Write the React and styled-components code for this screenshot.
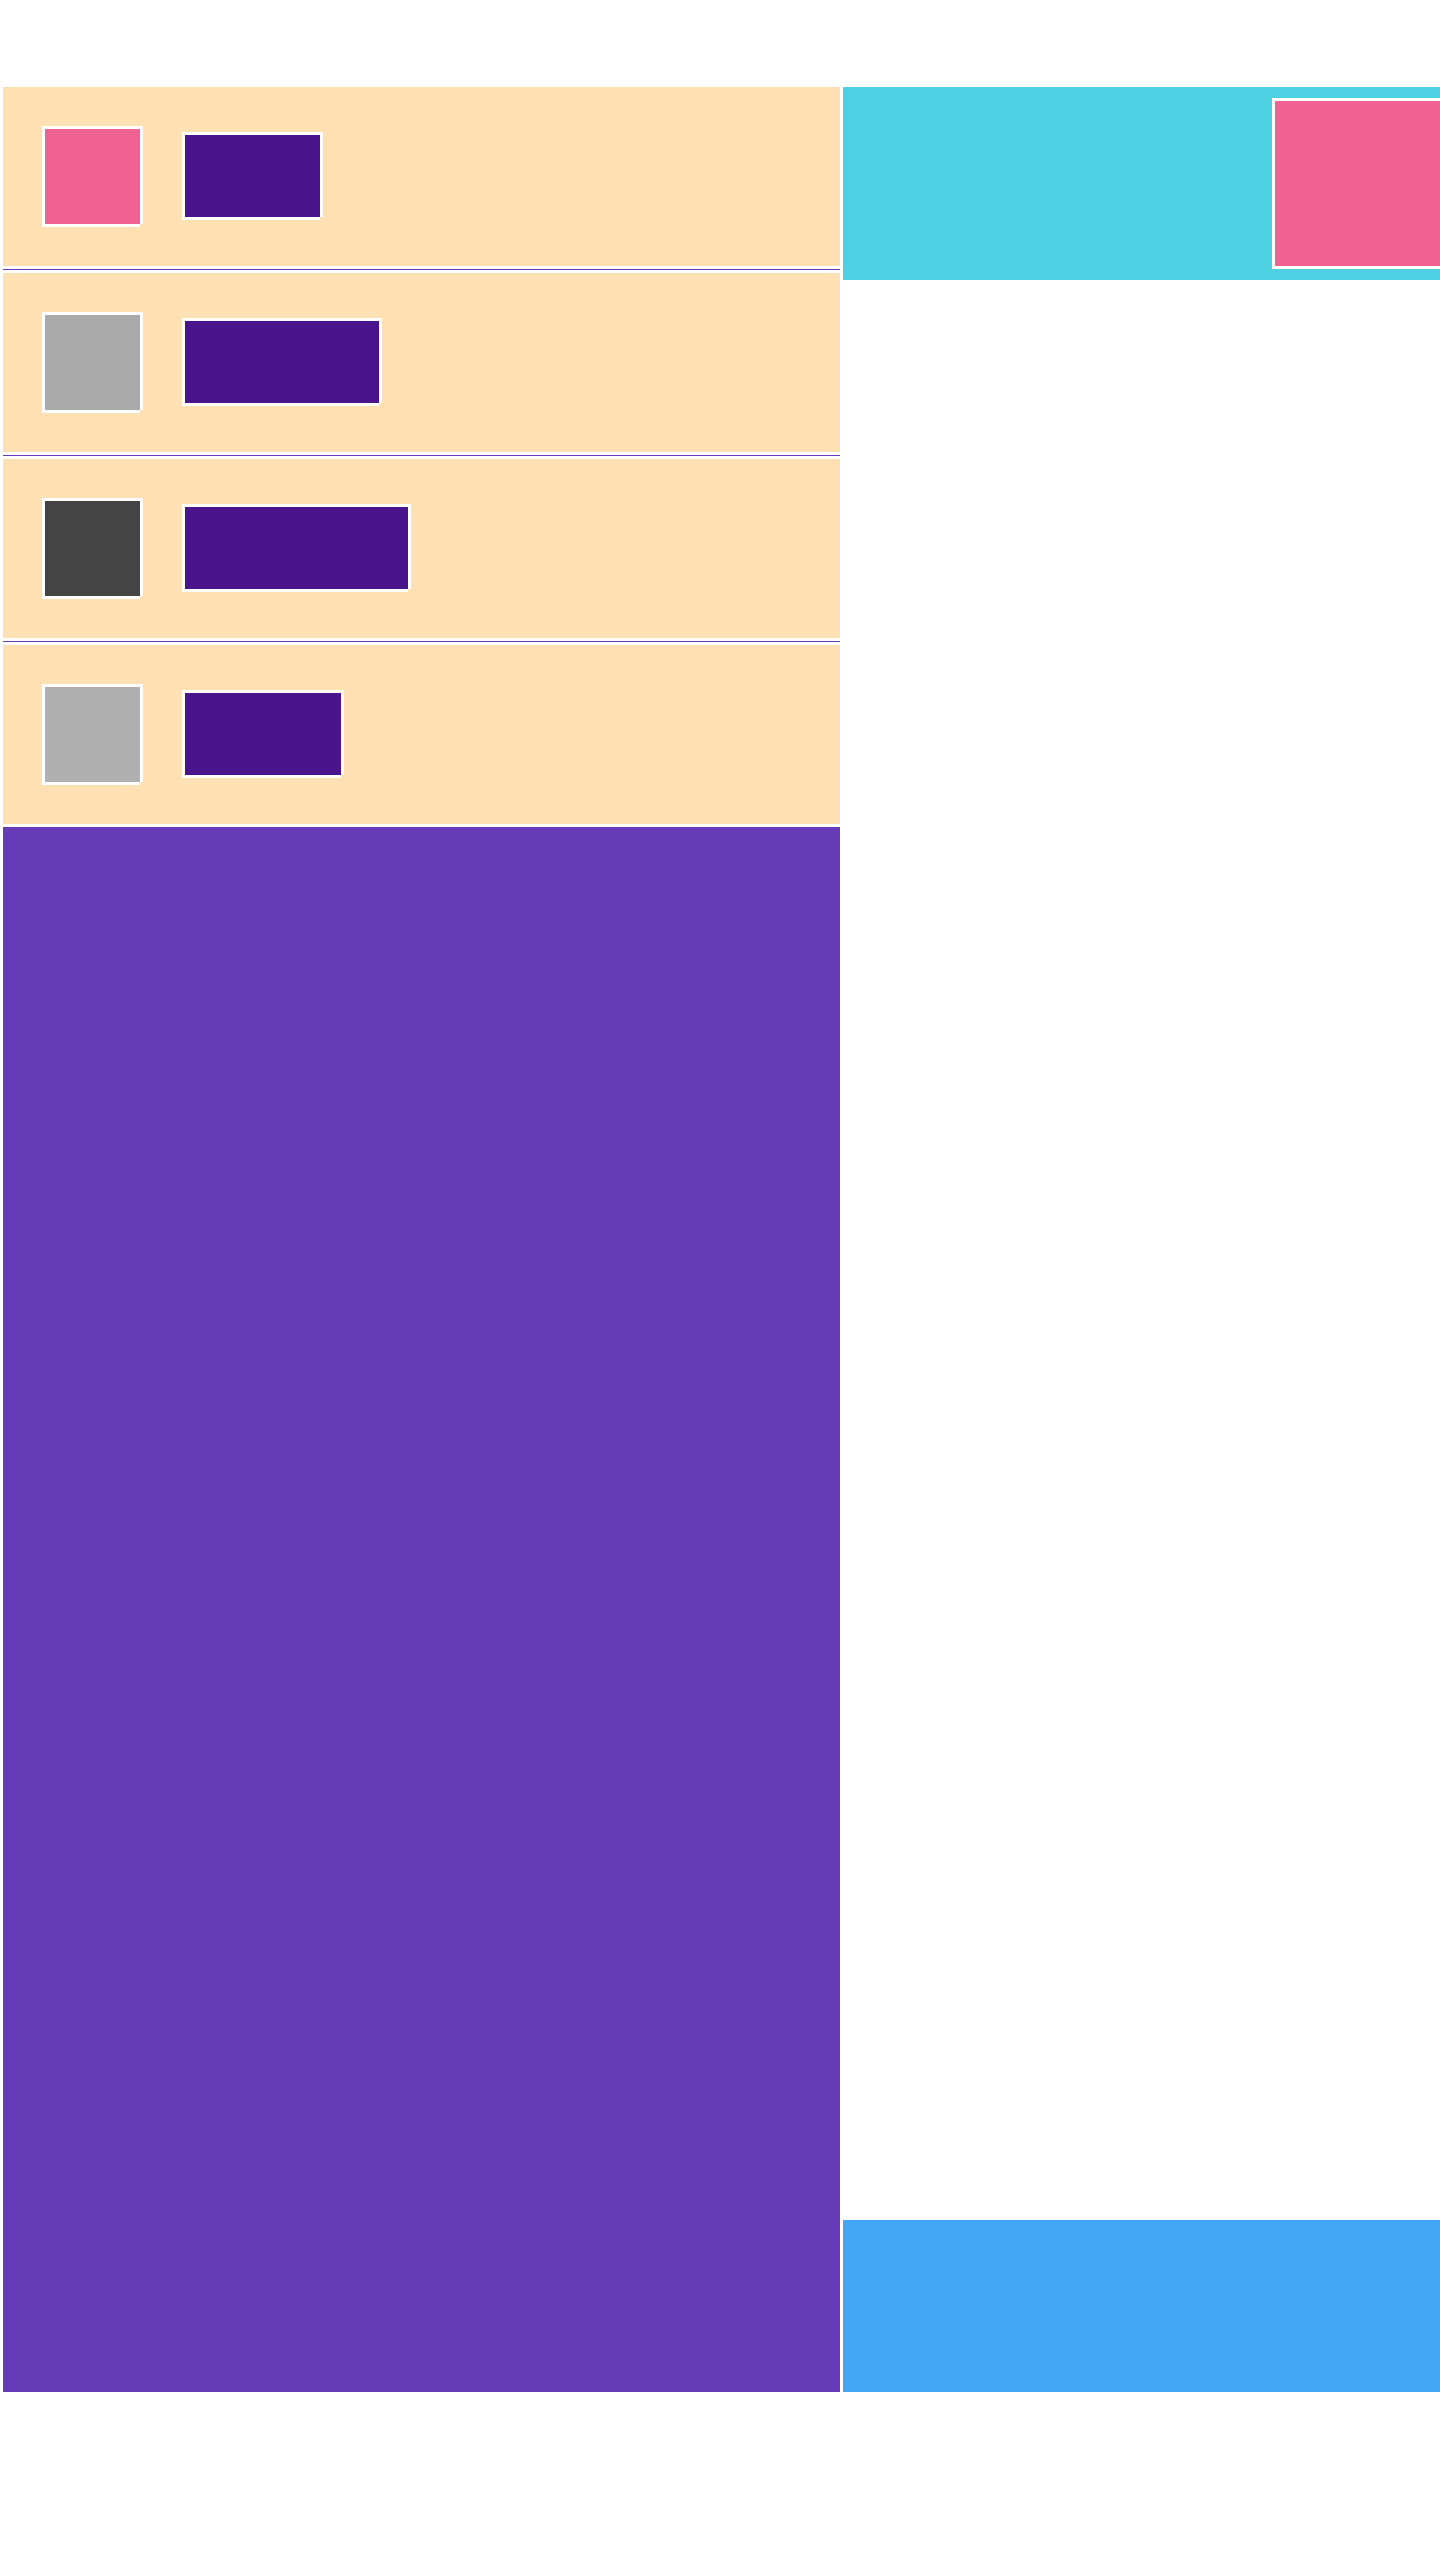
import React from "react";
import styled, { createGlobalStyle } from "styled-components";

const GlobalStyle = createGlobalStyle`
  html, body {
    margin: 0;
    padding: 0;
    background: #ffffff;
    overflow-x: hidden;
    font-family: "Liberation Sans", Arial, sans-serif;
  }
`;

const Page = styled.div`
  display: grid;
  grid-template-columns: 837px 611px;
  column-gap: 3px;
  width: max-content;
  padding: 87px 0 168px 3px;
`;

const LeftColumn = styled.div`
  display: flex;
  flex-direction: column;
  gap: 3px;
`;

const ListRow = styled.div`
  display: flex;
  align-items: flex-start;
  gap: 39px;
  padding: 39px;
  background: #ffe0b2;
`;

const Divider = styled.div`
  height: 1px;
  background: #673ab7;
`;

const Tile = styled.div`
  box-sizing: border-box;
  flex: none;
  width: ${(p) => p.$w + 6}px;
  height: ${(p) => p.$h + 6}px;
  margin-top: ${(p) => p.$offset || 0}px;
  border: 3px solid #ffffff;
  background: ${(p) => p.$color};
  clip-path: polygon(
    0 0,
    100% 0,
    100% calc(100% - 3px),
    calc(100% - 3px) calc(100% - 3px),
    calc(100% - 3px) 100%,
    0 100%
  );
`;

const ContentPanel = styled.div`
  height: 1565px;
  background: #673ab7;
`;

const RightColumn = styled.div`
  display: flex;
  flex-direction: column;
  justify-content: space-between;
`;

const HeaderBar = styled.div`
  box-sizing: border-box;
  display: flex;
  justify-content: flex-end;
  height: 193px;
  padding: 11px;
  background: #4dd0e1;
`;

const FooterBar = styled.div`
  height: 172px;
  background: #42a5f5;
`;

const rows = [
  { swatch: "#f06292", bar: 135 },
  { swatch: "#aaaaaa", bar: 194 },
  { swatch: "#444444", bar: 223 },
  { swatch: "#b0b0b0", bar: 156 },
];

export default function App() {
  return (
    <>
      <GlobalStyle />
      <Page>
        <LeftColumn>
          {rows.map((r, i) => (
            <React.Fragment key={i}>
              {i > 0 && <Divider />}
              <ListRow>
                <Tile $w={95} $h={95} $color={r.swatch} />
                <Tile $w={r.bar} $h={82} $offset={6} $color="#4a148c" />
              </ListRow>
            </React.Fragment>
          ))}
          <ContentPanel />
        </LeftColumn>
        <RightColumn>
          <HeaderBar>
            <Tile $w={165} $h={165} $color="#f06292" />
          </HeaderBar>
          <FooterBar />
        </RightColumn>
      </Page>
    </>
  );
}
